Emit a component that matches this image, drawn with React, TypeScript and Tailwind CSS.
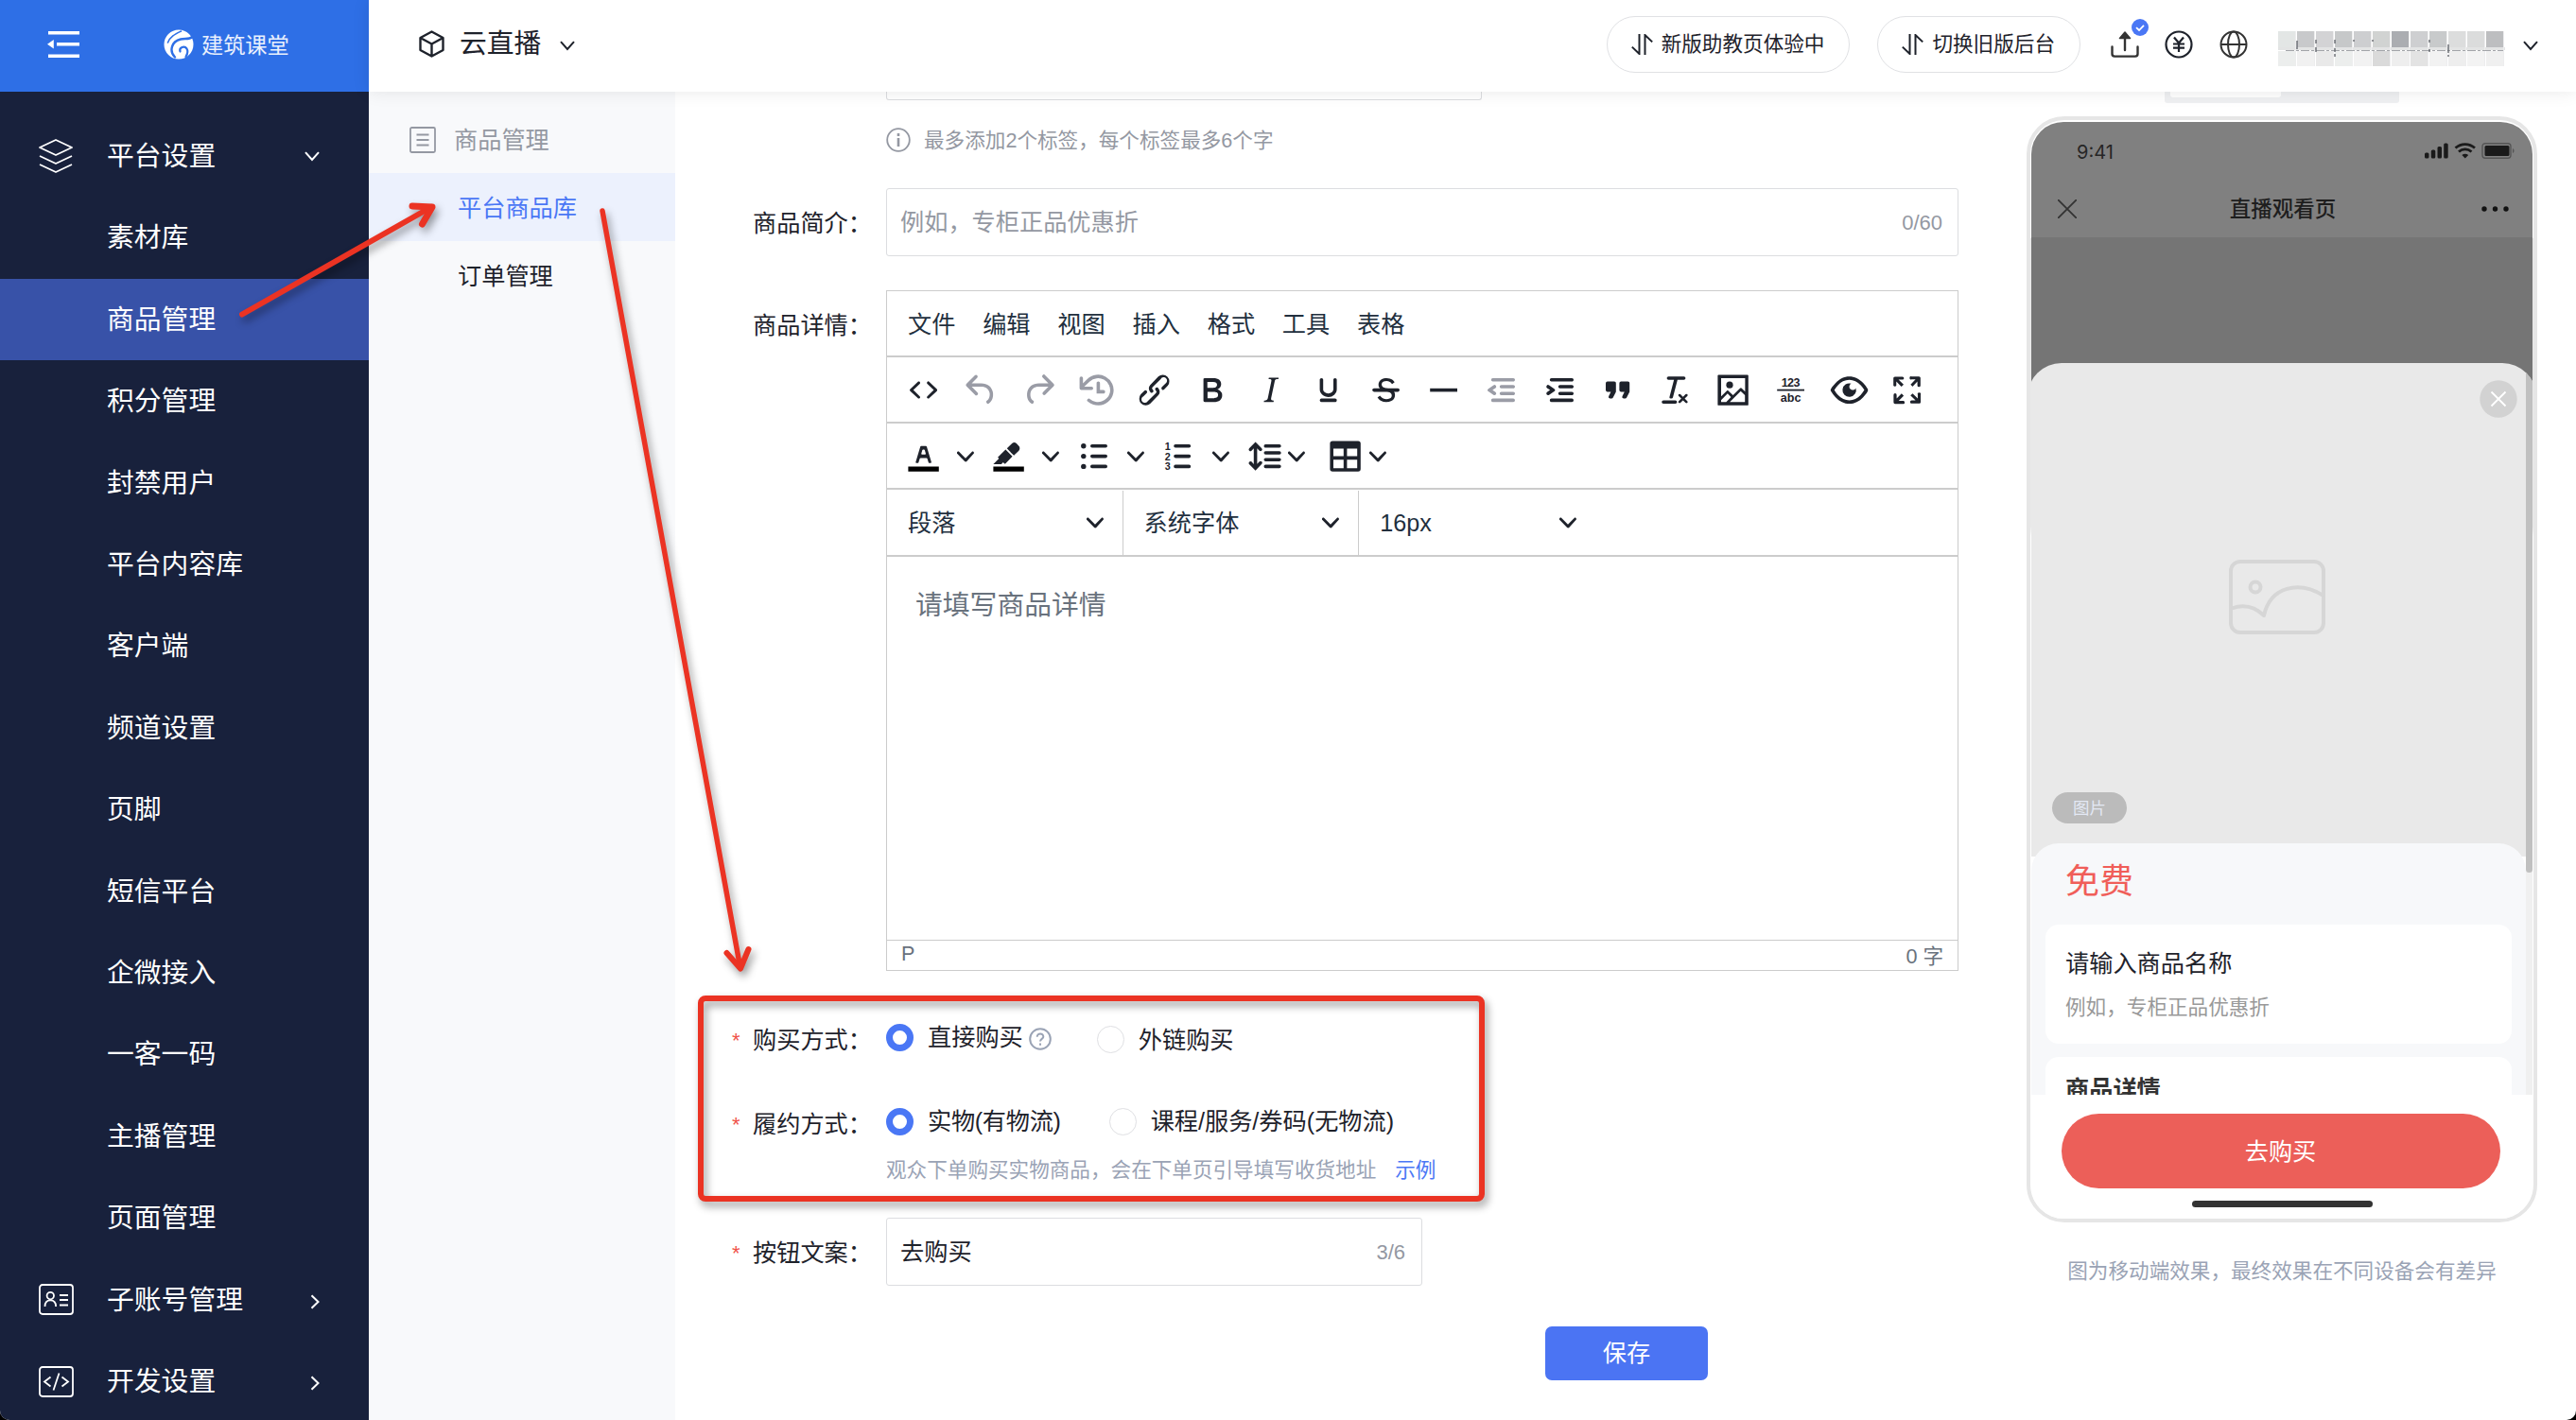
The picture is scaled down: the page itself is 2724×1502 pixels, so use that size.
import type { ReactNode } from "react";
import clsx from "clsx";

type MenuItem = {
  label: string;
  icon?: ReactNode;
  arrow?: "down" | "right";
  active?: boolean;
};

/* ---------- small shared icons ---------- */

function Chevron({ className, right }: { className?: string; right?: boolean }) {
  return (
    <svg
      viewBox="0 0 16 16"
      className={clsx("h-4 w-4 shrink-0", className)}
      fill="none"
      stroke="currentColor"
      strokeWidth="2"
    >
      <path d={right ? "M4.5 1.2 11.5 8l-7 6.8" : "M1 4.2 8 12l7-7.8"} />
    </svg>
  );
}

function EditorChevron({ className }: { className?: string }) {
  return (
    <svg viewBox="0 0 10 10" className={clsx("h-[18px] w-[18px] shrink-0 fill-[#1e222b]", className)}>
      <path d="M8.7 2.2c.3-.3.8-.3 1 0 .4.4.4.9 0 1.2L5.7 7.8c-.3.3-.9.3-1.2 0L.2 3.4a.8.8 0 0 1 0-1.2c.3-.3.8-.3 1.1 0L5 6l3.7-3.8Z" />
    </svg>
  );
}

/* ---------- sidebar ---------- */

const layersIcon = (
  <svg viewBox="0 0 36 36" className="h-9 w-9" fill="none" stroke="#fff" strokeWidth="1.8" strokeLinejoin="round">
    <path d="M18 1 35 9l-17 8L1 9z" />
    <path d="m1 18 17 8 17-8M1 27l17 8 17-8" />
  </svg>
);

const accountIcon = (
  <svg viewBox="0 0 37 33" className="h-[33px] w-[37px]" fill="none" stroke="#fff" strokeWidth="1.8">
    <rect x="1" y="1" width="35" height="31" rx="3" />
    <circle cx="12.3" cy="12.6" r="3.7" />
    <path d="M6.5 24c0-4.2 2.2-6.6 5.8-6.6s5.8 2.4 5.8 6.6M22 12h9M22 17h9M22 22.500h9" />
  </svg>
);

const codeIcon = (
  <svg viewBox="0 0 37 33" className="h-[33px] w-[37px]" fill="none" stroke="#fff" strokeWidth="1.8">
    <rect x="1" y="1" width="35" height="31" rx="3" />
    <path d="m12.500 11.500-6.500 5 6.500 5M24.500 11.500l6.500 5-6.500 5M21.500 7.500l-6 18" />
  </svg>
);

const MENU: MenuItem[] = [
  { label: "平台设置", icon: layersIcon, arrow: "down" },
  { label: "素材库" },
  { label: "商品管理", active: true },
  { label: "积分管理" },
  { label: "封禁用户" },
  { label: "平台内容库" },
  { label: "客户端" },
  { label: "频道设置" },
  { label: "页脚" },
  { label: "短信平台" },
  { label: "企微接入" },
  { label: "一客一码" },
  { label: "主播管理" },
  { label: "页面管理" },
  { label: "子账号管理", icon: accountIcon, arrow: "right" },
  { label: "开发设置", icon: codeIcon, arrow: "right" },
];

function Sidebar() {
  return (
    <aside className="flex w-[390px] shrink-0 flex-col bg-[#18213c] text-white">
      <div className="flex h-[97px] shrink-0 items-center bg-[#2e6fe6] pl-[50px]">
        <svg viewBox="0 0 34 30" className="-mt-1 h-[30px] w-[34px] fill-white">
          <path d="M1 1h33v3.600H1zM10 13h24v3.600H10zM1 25.500h33v3.600H1zM0 14.800 6.800 10v9.600z" />
        </svg>
        <svg viewBox="0 0 32 32" className="-mt-1 ml-[89px] h-8 w-8">
          <circle cx="16" cy="16" r="15.500" fill="#fff" />
          <g fill="none" stroke="#2e6fe6" strokeLinecap="round">
            <path d="M4.500 14C7 7.500 12.500 5 18.500 2" strokeWidth="1.600" />
            <path d="M12 29.500C5.500 23 8.500 12.500 18 10.500c5-1 9 .5 12.500-2.500" strokeWidth="2.400" />
            <path d="M17.500 23.500c-1.500-4.500 4.500-6.500 7-3 1.600 2.400.8 5.500-1 8.500" strokeWidth="2.200" />
          </g>
        </svg>
        <span className="ml-2 text-[23.200px] leading-none text-white/90">建筑课堂</span>
      </div>
      <nav className="flex flex-col pt-[25px]">
        {MENU.map((item) => (
          <div
            key={item.label}
            className={clsx("flex h-[86.4px] shrink-0 items-center pl-[41px]", item.active && "bg-[#3852a8]")}
          >
            <span className="w-[72px]">{item.icon}</span>
            <span className="pt-px text-[28.8px]">{item.label}</span>
            {item.arrow === "down" && <Chevron className="ml-auto mr-[52px]" />}
            {item.arrow === "right" && <Chevron right className="ml-auto mr-[49px] mt-1" />}
          </div>
        ))}
      </nav>
    </aside>
  );
}

/* ---------- top bar ---------- */

function SwitchIcon() {
  return (
    <svg viewBox="0 0 23 22" className="h-[22px] w-[23px]" fill="none" stroke="#1e222b" strokeWidth="2">
      <path d="M8.500 0v21L.8 13.600M14.500 22V1l7.700 7.400" />
    </svg>
  );
}

// blurred-out account name: two rows of tiles
const MOSAIC = [
  ["#e3e6e5", "#eceeed"],
  ["#c8c9cb", "#f1f1f1"],
  ["#d3d3d5", "#e9e9e9"],
  ["#c6c8c9", "#eceeed"],
  ["#cdced0", "#f2f2f2"],
  ["#d1d3d2", "#dadada"],
  ["#abadb1", "#eeeeee"],
  ["#cecfd1", "#e3e3e3"],
  ["#c8cacb", "#f2f2f2"],
  ["#dcdddd", "#eeeeee"],
  ["#dbdcdc", "#f3f3f3"],
  ["#bdbec0", "#f0f0f0"],
];

function AccountMosaic() {
  return (
    <svg viewBox="0 0 240 37" className="h-[37px] w-[240px]">
      {MOSAIC.map(([top, bottom], i) => (
        <g key={i}>
          <rect x={i * 20} y="0" width="18" height="17" fill={top} />
          <rect x={i * 20} y="17" width="20" height="3" fill="#e3e4e4" />
          <rect x={i * 20} y="21" width="18" height="16" fill={bottom} />
          <rect x={i * 20 + 18} y="0" width="1" height="37" fill="#ededee" />
        </g>
      ))}
      <path d="M8 20.500h230" stroke="#a3a5a9" strokeWidth="1" strokeDasharray="9 2 3 2" />
      <path
        d="M20 10v9M40 9v4M40 17v5M60 9v4M60 18v4M60 24v3M80 9v2M100 9v2M160 9v3M160 19v3M180 14v9M180 25v2"
        stroke="#5d6067"
        strokeWidth="1.300"
      />
    </svg>
  );
}

function TopBar() {
  return (
    <header className="relative z-10 flex h-[97px] shrink-0 items-center bg-white pb-1 pr-[40px] text-[#1e222b] shadow-[0_0_18px_rgba(0,0,0,0.09)]">
      <svg
        viewBox="0 0 27 29"
        className="ml-[53px] h-[29px] w-[27px]"
        fill="none"
        stroke="currentColor"
        strokeWidth="2.400"
        strokeLinejoin="round"
      >
        <path d="M13.500 1.500 25.500 8v13l-12 6.500L1.500 21V8zM1.500 8l12 6.500L25.500 8M13.500 14.500v13" />
      </svg>
      <span className="ml-4 text-[28.8px]">云直播</span>
      <Chevron className="ml-5 mt-[2px]" />

      <div className="ml-auto flex items-center">
        <div className="flex h-[60px] items-center rounded-full border border-[#e0e1e4] pl-[25px] pr-[26px]">
          <SwitchIcon />
          <span className="ml-[9px] pt-px text-[21.6px]">新版助教页体验中</span>
        </div>
        <div className="ml-[29px] flex h-[60px] items-center rounded-full border border-[#e0e1e4] pl-[25px] pr-[26px]">
          <SwitchIcon />
          <span className="ml-[9px] pt-px text-[21.6px]">切换旧版后台</span>
        </div>

        <div className="relative ml-8 h-7 w-[30px]">
          <svg viewBox="0 0 30 28" className="h-7 w-[30px]" fill="none" stroke="#333" strokeWidth="2.400">
            <path d="M1.500 16.500V24c0 1.600 1 2.600 2.600 2.600h21.800c1.600 0 2.600-1 2.600-2.600v-7.500M15 20V6" strokeLinecap="round" />
            <path d="M15 1 9.500 7.500h11z" fill="#333" strokeWidth="1.500" strokeLinejoin="round" />
          </svg>
          <svg viewBox="0 0 18 18" className="absolute -top-[13px] left-[22px] h-[18px] w-[18px]">
            <circle cx="9" cy="9" r="9" fill="#4a77f5" />
            <path d="m5 9.200 3 2.800 5-5.200" fill="none" stroke="#fff" strokeWidth="1.800" />
          </svg>
        </div>
        <svg viewBox="0 0 30 30" className="ml-[27px] h-[30px] w-[30px]" fill="none" stroke="#1e222b" strokeWidth="2.200">
          <circle cx="15" cy="15" r="13.500" />
          <path d="m10 7.500 5 6 5-6M9 14.500h12M9 18.700h12M15 13.500V23" />
        </svg>
        <svg viewBox="0 0 30 30" className="ml-7 h-[30px] w-[30px]" fill="none" stroke="#333" strokeWidth="2">
          <circle cx="15" cy="15" r="13.500" />
          <ellipse cx="15" cy="15" rx="6" ry="13.500" />
          <path d="M1.500 15h27" />
        </svg>
        <div className="ml-8 mt-[10px]">
          <AccountMosaic />
        </div>
        <Chevron className="ml-[19px] mt-[2px]" />
      </div>
    </header>
  );
}

/* ---------- second level menu ---------- */

function SubMenu() {
  return (
    <div className="flex w-[324px] shrink-0 flex-col bg-[#f8f9fb] pt-[14px] text-[25.2px]">
      <div className="flex h-[72px] items-center pl-[43px] pt-[2px] text-[#9498a2]">
        <svg viewBox="0 0 28 28" className="h-7 w-7" fill="none" stroke="currentColor" strokeWidth="1.800">
          <rect x="1" y="1" width="26" height="26" rx="1.500" />
          <path d="M7.500 8.500h13M7.500 14h13M7.500 19.500h13" />
        </svg>
        <span className="ml-[19px] pt-[2px]">商品管理</span>
      </div>
      <div className="flex h-[72px] items-center bg-[#ecf1fd] pl-[94px] pt-[4px] text-[#4a77f5]">平台商品库</div>
      <div className="flex h-[72px] items-center pl-[94px] pt-[4px] text-[#1e222b]">订单管理</div>
    </div>
  );
}

/* ---------- rich text editor ---------- */

function Glyph({ children, muted }: { children: ReactNode; muted?: boolean }) {
  return (
    <svg
      viewBox="0 0 24 24"
      className={clsx("h-[43.2px] w-[43.2px] shrink-0", muted ? "fill-[#9a9ca6]" : "fill-[#1e222b]")}
    >
      {children}
    </svg>
  );
}

function Tool({ children, muted }: { children: ReactNode; muted?: boolean }) {
  return (
    <div className="flex w-[61.200px] shrink-0 items-center justify-center">
      <Glyph muted={muted}>{children}</Glyph>
    </div>
  );
}

function SplitTool({ children }: { children: ReactNode }) {
  return (
    <div className="flex w-[90px] items-center">
      <Tool>{children}</Tool>
      <EditorChevron className="ml-[5px]" />
    </div>
  );
}

function MenuTool({ children }: { children: ReactNode }) {
  return (
    <div className="flex w-[86px] items-center pl-[9px]">
      <Glyph>{children}</Glyph>
      <EditorChevron className="ml-1" />
    </div>
  );
}

function Select({ label, last }: { label: string; last?: boolean }) {
  return (
    <div
      className={clsx(
        "flex h-[68px] w-[249.600px] items-center justify-between pl-[22px] pr-[20px]",
        !last && "border-r border-[#ccc]",
      )}
    >
      <span className="pt-[3px]">{label}</span>
      <EditorChevron className="mt-px" />
    </div>
  );
}

const MENUBAR = ["文件", "编辑", "视图", "插入", "格式", "工具", "表格"];

function Editor() {
  return (
    <div className="flex h-[720px] w-[1134px] flex-col border border-[#ccc] text-[25.2px] text-[#222f3e]">
      <div className="flex h-[70px] items-center gap-[28.8px] border-b-2 border-[#ccc] pl-[22px] pt-[3px]">
        {MENUBAR.map((m) => (
          <span key={m}>{m}</span>
        ))}
      </div>

      <div className="flex h-[70px] items-center border-b-2 border-[#ccc] pl-[7.500px] pt-[2px]">
        <Tool>
          <path d="M9.800 15.700c.3.3.3.8 0 1-.3.4-.9.4-1.200 0l-4.400-4.100a.8.8 0 0 1 0-1.200l4.400-4.200c.3-.3.9-.3 1.200 0 .3.3.3.8 0 1.100L6 12l3.800 3.700ZM14.200 15.700c-.3.3-.3.8 0 1 .4.4.9.4 1.200 0l4.400-4.100c.3-.3.3-.9 0-1.200l-4.400-4.200a.8.8 0 0 0-1.200 0c-.3.3-.3.8 0 1.100L18 12l-3.800 3.700Z" />
        </Tool>
        <Tool muted>
          <path d="M6.400 8H12c3.700 0 6.200 2 6.800 5.100.6 2.700-.4 5.600-2.300 6.800a1 1 0 0 1-1-1.800c1.100-.6 1.800-2.700 1.400-4.600-.5-2.100-2.100-3.500-4.900-3.500H6.400l3.300 3.300a1 1 0 1 1-1.400 1.400l-5-5a1 1 0 0 1 0-1.400l5-5a1 1 0 0 1 1.400 1.400L6.400 8Z" />
        </Tool>
        <Tool muted>
          <path d="M17.600 10H12c-2.800 0-4.400 1.400-4.900 3.500-.4 2 .3 4 1.400 4.600a1 1 0 1 1-1 1.800c-2-1.200-2.900-4.100-2.300-6.800.6-3 3-5.100 6.800-5.100h5.600l-3.300-3.300a1 1 0 1 1 1.400-1.400l5 5a1 1 0 0 1 0 1.400l-5 5a1 1 0 0 1-1.400-1.400l3.300-3.300Z" />
        </Tool>
        <Tool muted>
          <path d="M17 13c0 .6-.4 1-1 1h-4V8c0-.6.4-1 1-1s1 .4 1 1v4h2c.6 0 1 .4 1 1Z" />
          <path d="M4.700 10H9a1 1 0 0 1 0 2H3a1 1 0 0 1-1-1V5a1 1 0 1 1 2 0v3l2.500-2.400a9.200 9.200 0 0 1 10.800-1.500A9 9 0 0 1 13.400 21c-2.400.1-4.700-.7-6.500-2.200a1 1 0 1 1 1.300-1.500 7.200 7.200 0 0 0 11.600-3.700 7 7 0 0 0-3.500-7.700A7.200 7.200 0 0 0 8 7L4.700 10Z" />
        </Tool>
        <Tool>
          <path d="M6.200 12.300a1 1 0 0 1 1.400 1.400l-2 2a2 2 0 1 0 2.600 2.800l4.800-4.800a1 1 0 0 0 0-1.400 1 1 0 1 1 1.400-1.300 2.900 2.900 0 0 1 0 4L9.600 20a3.900 3.900 0 0 1-5.500-5.500l2-2Zm11.600-.6a1 1 0 0 1-1.400-1.400l2-2a2 2 0 1 0-2.600-2.800L11 10.300a1 1 0 0 0 0 1.400A1 1 0 1 1 9.600 13a2.900 2.900 0 0 1 0-4L14.400 4a3.900 3.900 0 0 1 5.500 5.500l-2 2Z" />
        </Tool>
        <Tool>
          <path
            fillRule="evenodd"
            d="M7.800 19c-.3 0-.5 0-.6-.2l-.2-.5V5.700c0-.2 0-.4.2-.5l.6-.2h5c1.500 0 2.700.3 3.500 1 .7.6 1.100 1.400 1.100 2.500a3 3 0 0 1-.6 1.900c-.4.6-1 1-1.600 1.200.4.1.9.3 1.300.6s.8.7 1 1.200c.4.4.5 1 .5 1.600 0 1.300-.4 2.300-1.300 3-.8.7-2.100 1-3.800 1H7.800Zm5-8.300c.6 0 1.200-.1 1.600-.5.4-.3.6-.7.6-1.300 0-1.100-.8-1.700-2.300-1.700H9.300v3.500h3.400Zm.5 6c.7 0 1.300-.1 1.700-.4.4-.4.6-.9.6-1.500s-.2-1-.7-1.400c-.4-.3-1-.4-2-.4H9.400v3.800h4Z"
          />
        </Tool>
        <Tool>
          <path d="m16.700 4.700-.1.900h-.3c-.6 0-1 0-1.400.3-.3.3-.4.6-.5 1.100l-2.100 9.800v.6c0 .5.4.8 1.400.8h.2l-.2.8H8l.2-.8h.2c1.100 0 1.800-.5 2-1.500l2-9.800.1-.5c0-.6-.4-.8-1.400-.8h-.3l.2-.9h5.800Z" />
        </Tool>
        <Tool>
          <path d="M16 5c.6 0 1 .4 1 1v5.500a4 4 0 0 1-.4 1.800l-1 1.400a5.300 5.300 0 0 1-5.500 1 5 5 0 0 1-1.600-1c-.5-.4-.8-.9-1.100-1.400a4 4 0 0 1-.4-1.800V6c0-.6.4-1 1-1s1 .4 1 1v5.500c0 .3 0 .6.2 1l.6.7a3.300 3.300 0 0 0 2.200.8 3.400 3.400 0 0 0 2.200-.8c.3-.2.4-.5.6-.8l.2-.9V6c0-.6.4-1 1-1ZM8 17h8c.6 0 1 .4 1 1s-.4 1-1 1H8a1 1 0 0 1 0-2Z" />
        </Tool>
        <Tool>
          <path d="M15.600 8.500c-.5-.7-1-1.100-1.300-1.300-.6-.4-1.300-.6-2-.6-2.700 0-2.800 1.700-2.800 2.100 0 1.600 1.800 2 3.200 2.300 4.400.9 4.600 2.800 4.600 3.900 0 1.400-.7 4.100-5 4.100A6.200 6.200 0 0 1 7 16.400l1.500-1.100c.4.6 1.600 2 3.700 2 1.600 0 2.500-.4 3-1.200.4-.8.3-2-.8-2.600-.7-.4-1.600-.7-2.900-1-1-.2-3.900-.8-3.900-3.600C7.600 6 10.300 5 12.400 5c2.900 0 4.200 1.600 4.700 2.400l-1.500 1.100Z" />
          <path d="M5 11h14a1 1 0 0 1 0 2H5a1 1 0 0 1 0-2Z" />
        </Tool>
        <Tool>
          <path d="M4 11h16v2H4z" />
        </Tool>
        <Tool muted>
          <path d="M7 5h12c.6 0 1 .4 1 1s-.4 1-1 1H7a1 1 0 1 1 0-2Zm5 4h7c.6 0 1 .4 1 1s-.4 1-1 1h-7a1 1 0 0 1 0-2Zm0 4h7c.6 0 1 .4 1 1s-.4 1-1 1h-7a1 1 0 0 1 0-2Zm-5 4h12a1 1 0 0 1 0 2H7a1 1 0 0 1 0-2Zm1.600-3.800a1 1 0 0 1-1.200 1.600l-3-2a1 1 0 0 1 0-1.600l3-2a1 1 0 0 1 1.200 1.600L6.800 12l1.800 1.200Z" />
        </Tool>
        <Tool>
          <path d="M7 5h12c.6 0 1 .4 1 1s-.4 1-1 1H7a1 1 0 1 1 0-2Zm5 4h7c.6 0 1 .4 1 1s-.4 1-1 1h-7a1 1 0 0 1 0-2Zm0 4h7c.6 0 1 .4 1 1s-.4 1-1 1h-7a1 1 0 0 1 0-2Zm-5 4h12a1 1 0 0 1 0 2H7a1 1 0 0 1 0-2Zm-2.600-3.800L6.200 12l-1.800-1.200a1 1 0 0 1 1.200-1.600l3 2a1 1 0 0 1 0 1.600l-3 2a1 1 0 1 1-1.200-1.600Z" />
        </Tool>
        <Tool>
          <path d="M7.500 17h.9c.4 0 .7-.2.9-.6L11 13V8c0-.6-.4-1-1-1H6a1 1 0 0 0-1 1v4c0 .6.4 1 1 1h2l-1.300 2.700a1 1 0 0 0 .8 1.300Zm8 0h.9c.4 0 .7-.2.9-.6L19 13V8c0-.6-.4-1-1-1h-4a1 1 0 0 0-1 1v4c0 .6.4 1 1 1h2l-1.300 2.700a1 1 0 0 0 .8 1.300Z" />
        </Tool>
        <Tool>
          <path d="M13.200 6a1 1 0 0 1 0 .2l-2.600 10a1 1 0 0 1-1 .8h-.2a.8.8 0 0 1-.8-1l2.600-10H8a1 1 0 1 1 0-2h9a1 1 0 0 1 0 2h-3.800ZM5 18h7a1 1 0 0 1 0 2H5a1 1 0 0 1 0-2Zm13 1.500L16.500 18 15 19.500a.7.7 0 0 1-1-1l1.500-1.500-1.500-1.500a.7.7 0 0 1 1-1l1.500 1.500 1.500-1.500a.7.7 0 0 1 1 1L17.500 17l1.500 1.500a.7.7 0 0 1-1 1Z" />
        </Tool>
        <Tool>
          <path
            fillRule="evenodd"
            d="m5 15.700 3.300-3.200c.3-.3.7-.3 1 0L12 15l4.100-4c.3-.4.8-.4 1 0l2 1.900V5H5v10.700ZM5 18v1h3l2.800-2.900-2-2L5 17.900Zm14-3-2.500-2.400-6.400 6.500H19v-4ZM3.500 3h17c.3 0 .5.200.5.500v17c0 .3-.2.500-.5.500h-17a.5.500 0 0 1-.5-.5v-17c0-.3.200-.5.500-.5Z"
          />
          <circle cx="10" cy="9" r="2" />
        </Tool>
        <Tool>
          <path d="M4 11.500h16v1H4z" />
          <text x="12" y="10" fontSize="7" fontWeight="700" textAnchor="middle" textLength="11">
            123
          </text>
          <text x="12" y="19" fontSize="7" fontWeight="700" textAnchor="middle">
            abc
          </text>
        </Tool>
        <Tool>
          <path
            fillRule="evenodd"
            d="M3.500 12.500c.5.8 1.100 1.600 1.800 2.300 2 2 4.200 3.200 6.700 3.200s4.700-1.200 6.700-3.200a16.200 16.200 0 0 0 2.100-2.800 15.700 15.700 0 0 0-2.100-2.800c-2-2-4.200-3.200-6.700-3.200a9.300 9.300 0 0 0-6.700 3.200A16.200 16.200 0 0 0 3.200 12c0 .2.200.3.300.5Zm-2.400-1 .7-1.200L4 7.800C6.200 5.400 8.900 4 12 4c3 0 5.800 1.400 8.100 3.800a18.200 18.200 0 0 1 2.800 3.700v1l-.7 1.200-2.100 2.500c-2.300 2.400-5 3.800-8.100 3.800-3 0-5.800-1.400-8.100-3.800a18.200 18.200 0 0 1-2.800-3.700 1 1 0 0 1 0-1Zm12-3.300a2 2 0 1 0 2.700 2.600 4 4 0 1 1-2.600-2.600Z"
          />
        </Tool>
        <Tool>
          <path d="m15.300 10-1.200-1.300 2.900-3h-2.300a.9.900 0 1 1 0-1.700H19c.5 0 .9.400.9.900v4.400a.9.900 0 1 1-1.800 0V7l-2.900 3Zm0 4 3 3v-2.300a.9.900 0 1 1 1.700 0V19c0 .5-.4.900-.9.900h-4.400a.9.900 0 1 1 0-1.800H17l-3-2.900 1.300-1.200ZM10 15.400l-2.900 3h2.300a.9.900 0 1 1 0 1.700H5a.9.900 0 0 1-.9-.9v-4.400a.9.900 0 1 1 1.800 0V17l2.900-3 1.200 1.300ZM8.700 10 5.700 7v2.300a.9.900 0 0 1-1.700 0V5c0-.5.400-.9.900-.9h4.400a.9.900 0 0 1 0 1.800H7l3 2.900-1.300 1.200Z" />
        </Tool>
      </div>

      <div className="flex h-[70px] items-center border-b-2 border-[#ccc] pl-[7.500px] pt-[2px]">
        <SplitTool>
          <path d="M3 18h18v3H3z" fill="#000" />
          <path
            fillRule="evenodd"
            d="M8.700 16h-.8a.5.500 0 0 1-.5-.6l2.700-9c.1-.3.3-.4.5-.4h2.800c.2 0 .4.1.5.4l2.700 9a.5.500 0 0 1-.5.6h-.8a.4.400 0 0 1-.4-.4l-.7-2.200c0-.3-.3-.4-.5-.4h-3.400c-.2 0-.4.1-.5.4l-.7 2.200c0 .3-.2.4-.4.400Zm2.600-7.600-.6 2a.5.500 0 0 0 .5.6h1.600a.5.500 0 0 0 .5-.6l-.6-2c0-.3-.3-.4-.5-.4h-.4c-.2 0-.4.1-.5.400Z"
          />
        </SplitTool>
        <SplitTool>
          <path d="M3 18h18v3H3z" fill="#000" />
          <path d="M7.700 16.700H3l3.300-3.300-.7-.8L10.200 8l4 4.100-4 4.200c-.2.2-.6.2-.8 0l-.6-.7-1.100 1.100Zm5-7.500L11 7.400l3-2.900a2 2 0 0 1 2.600 0L18 6c.7.7.7 2 0 2.700l-2.900 2.900-1.800-1.800-.5-.6" />
        </SplitTool>
        <SplitTool>
          <path d="M11 5h8a1 1 0 0 1 0 2h-8a1 1 0 0 1 0-2Zm0 6h8a1 1 0 0 1 0 2h-8a1 1 0 0 1 0-2Zm0 6h8a1 1 0 0 1 0 2h-8a1 1 0 0 1 0-2Z" />
          <circle cx="6" cy="6" r="1.500" />
          <circle cx="6" cy="12" r="1.500" />
          <circle cx="6" cy="18" r="1.500" />
        </SplitTool>
        <SplitTool>
          <path d="M10 5h8a1 1 0 0 1 0 2h-8a1 1 0 0 1 0-2Zm0 6h8a1 1 0 0 1 0 2h-8a1 1 0 0 1 0-2Zm0 6h8a1 1 0 0 1 0 2h-8a1 1 0 0 1 0-2Z" />
          <g fontSize="6" fontWeight="700" textAnchor="middle">
            <text x="5.400" y="8.200">1</text>
            <text x="5.400" y="14.200">2</text>
            <text x="5.400" y="20.200">3</text>
          </g>
        </SplitTool>
        <MenuTool>
          <path d="M21 5a1 1 0 0 1 .1 2H13a1 1 0 0 1-.1-2H21zm0 4a1 1 0 0 1 .1 2H13a1 1 0 0 1-.1-2H21zm0 4a1 1 0 0 1 .1 2H13a1 1 0 0 1-.1-2H21zm0 4a1 1 0 0 1 .1 2H13a1 1 0 0 1-.1-2H21zM7 3.600l3.700 3.700a1 1 0 0 1-1.300 1.500h-.1L8 7.300v9.200l1.300-1.300a1 1 0 0 1 1.300 0h.1c.4.4.4 1 0 1.300v.1L7 20.400l-3.700-3.700a1 1 0 0 1 1.300-1.500h.1L6 16.700V7.400L4.700 8.700a1 1 0 0 1-1.300 0h-.1a1 1 0 0 1 0-1.300v-.1L7 3.600z" />
        </MenuTool>
        <MenuTool>
          <path
            fillRule="evenodd"
            d="M19.500 3A1.500 1.500 0 0 1 21 4.500v15a1.500 1.500 0 0 1-1.500 1.500h-15A1.500 1.500 0 0 1 3 19.500v-15A1.500 1.500 0 0 1 4.500 3h15ZM5 14v5h6v-5H5Zm14 0h-6v5h6v-5Zm0-6.500h-6V12h6V7.500ZM5 12h6V7.500H5V12Z"
          />
        </MenuTool>
      </div>

      <div className="flex h-[71px] items-center border-b-2 border-[#ccc]">
        <Select label="段落" />
        <Select label="系统字体" />
        <Select label="16px" last />
      </div>

      <div className="flex-1 pl-[30px] pt-[30px] text-[28.8px] leading-[43px] text-[#69727d]">请填写商品详情</div>

      <div className="flex h-[32px] items-center justify-between border-t border-[#ccc] px-[15px] text-[21.6px] leading-none text-[#69727d]">
        <span className="-mt-1">P</span>
        <span className="pt-[2px]">0 字</span>
      </div>
    </div>
  );
}

/* ---------- form ---------- */

function FormRow({
  label,
  required,
  children,
  className,
  labelClassName,
}: {
  label?: string;
  required?: boolean;
  children: ReactNode;
  className?: string;
  labelClassName?: string;
}) {
  return (
    <div className={clsx("flex", className)}>
      <div className={clsx("flex w-[223px] shrink-0 items-center pl-[60px]", labelClassName ?? "pt-[3px]")}>
        <span className="w-[22px] text-[22px] leading-none text-[#f0524b]">{required && "*"}</span>
        {label && <span className="whitespace-nowrap">{label}：</span>}
      </div>
      {children}
    </div>
  );
}

function Radio({ checked, className }: { checked?: boolean; className?: string }) {
  return (
    <span
      className={clsx(
        "h-[29px] w-[29px] shrink-0 rounded-full bg-white",
        checked ? "border-[7px] border-[#4a77f5]" : "border border-[#dfe0e3]",
        className,
      )}
    />
  );
}

function ProductForm() {
  return (
    <div className="flex w-[1357px] shrink-0 flex-col text-[25.2px] text-[#1e222b]">
      <FormRow>
        <div className="h-[9px] w-[630px] rounded-b-[3px] border border-t-0 border-[#dcdde0]" />
      </FormRow>
      <FormRow className="mb-[9px] h-[84px]">
        <div className="flex items-center text-[21.6px] text-[#9498a2]">
          <svg viewBox="0 0 26 26" className="h-[26px] w-[26px]" fill="none" stroke="currentColor" strokeWidth="1.800">
            <circle cx="13" cy="13" r="11.800" />
            <path d="M13 11v9M13 6v3" strokeWidth="2.600" />
          </svg>
          <span className="ml-[14px] pt-[3px]">最多添加2个标签，每个标签最多6个字</span>
        </div>
      </FormRow>

      <FormRow label="商品简介" className="h-[72px]">
        <div className="flex w-[1134px] items-center justify-between rounded-[3px] border border-[#dcdde0] pl-[14px] pr-[16px] text-[#9498a2]">
          <span className="pt-[2px]">例如，专柜正品优惠折</span>
          <span className="text-[22px]">0/60</span>
        </div>
      </FormRow>

      <FormRow label="商品详情" className="mt-9" labelClassName="h-[75px]">
        <Editor />
      </FormRow>

      <FormRow label="购买方式" required className="mt-[43px] h-[58px]">
        <div className="flex items-center">
          <Radio checked className="-mt-1" />
          <span className="-mt-[3px] ml-[15px]">直接购买</span>
          <svg viewBox="0 0 24 24" className="ml-[6px] h-6 w-6" fill="none" stroke="#9aa3b5" strokeWidth="2">
            <circle cx="12" cy="12" r="10.800" />
            <path d="M8.700 9.800c0-4.600 6.800-4.200 6.600-.2-.1 2.300-3.300 2.400-3.300 5M12 16.500v2.300" />
          </svg>
          <Radio className="ml-12 mt-px" />
          <span className="ml-[15px] pt-[3px]">外链购买</span>
        </div>
      </FormRow>

      <FormRow label="履约方式" required className="mt-[29px] h-[58px]" labelClassName="pt-[7px]">
        <div className="flex items-center">
          <Radio checked />
          <span className="ml-[15px] pt-[2px] tracking-[-0.3px]">实物(有物流)</span>
          <Radio className="ml-[51px]" />
          <span className="ml-[15px] pt-[2px]">课程/服务/券码(无物流)</span>
        </div>
      </FormRow>
      <FormRow className="h-[45px]">
        <div className="flex items-center pt-[2px] text-[21.6px] text-[#9aa3b5]">
          <span>观众下单购买实物商品，会在下单页引导填写收货地址</span>
          <span className="ml-5 text-[#4a77f5]">示例</span>
        </div>
      </FormRow>

      <FormRow label="按钮文案" required className="mt-7 h-[72px]">
        <div className="flex w-[567px] items-center justify-between rounded-[3px] border border-[#dcdde0] pl-[14px] pr-[17px]">
          <span className="pt-[2px]">去购买</span>
          <span className="text-[22px] text-[#9498a2]">3/6</span>
        </div>
      </FormRow>

      <button className="ml-[920px] mt-[43px] h-[57px] w-[172px] rounded-[7px] bg-[#4b74f3] pt-px text-white">
        保存
      </button>
    </div>
  );
}

/* ---------- phone preview ---------- */

function PhoneStatus() {
  return (
    <div className="flex h-[64px] items-center pl-[48px] pr-[19px]">
      <span className="font-[Inter] text-[20px] text-[#262626]">9:41</span>
      <svg viewBox="0 0 95 17" className="-mt-[4px] ml-auto h-[17px] w-[95px] fill-[#1a1a1a]">
        <rect x="0" y="10.500" width="4.500" height="6" rx="1.500" />
        <rect x="6.800" y="7.500" width="4.500" height="9" rx="1.500" />
        <rect x="13.500" y="4" width="4.500" height="12.500" rx="1.500" />
        <rect x="20.200" y="0.500" width="4.500" height="16" rx="1.500" />
        <g fill="none" stroke="#1a1a1a" strokeWidth="2.800">
          <path d="M32.500 5.500c6-5.300 14.500-5.300 20.500 0M36 9.500c4-3.400 9.500-3.400 13.500 0" />
        </g>
        <path d="m42.800 16.500-3.400-3.600c2-1.600 4.800-1.600 6.800 0z" />
        <rect x="61" y="0.700" width="30" height="15.500" rx="3" fill="none" stroke="#555" strokeWidth="1.400" />
        <rect x="63.500" y="3" width="26" height="11" rx="1.500" />
        <path d="M93 6c2 .8 2 4 0 5z" fill="#555" />
      </svg>
    </div>
  );
}

function PhonePreview() {
  return (
    <div className="ml-[72px] flex w-[540px] shrink-0 flex-col items-center">
      <div className="flex h-3 w-[248px] items-start rounded-b-[3px] bg-[#eff0f2] pl-[6px]">
        <div className="h-[6px] w-[117px] rounded-b-[3px] bg-white" />
      </div>
      <div className="mt-[14px] h-[1170px] w-full rounded-[40px] border-4 border-[#e6e6e6] bg-[linear-gradient(#fff_125px,#e9e9e9_125px,#e9e9e9_430px,#fff_440px)] px-px pt-[2px]">
        <div className="flex h-full flex-col overflow-hidden rounded-[34px]">
          <div className="h-[122px] shrink-0 bg-[#808080]">
            <PhoneStatus />
            <div className="flex h-[56px] items-center justify-between pl-[28px] pr-[25px]">
              <svg viewBox="0 0 20 20" className="h-5 w-5" stroke="#333" strokeWidth="1.800">
                <path d="m0 0 20 20M20 0 0 20" />
              </svg>
              <span className="pl-2 pt-px text-[22.500px] font-medium text-[#1e1e1e]">直播观看页</span>
              <svg viewBox="0 0 29 6" className="h-[6px] w-[29px] fill-[#111]">
                <circle cx="3" cy="3" r="2.700" />
                <circle cx="14.500" cy="3" r="2.700" />
                <circle cx="26" cy="3" r="2.700" />
              </svg>
            </div>
          </div>

          <div className="h-[907px] shrink-0 overflow-hidden bg-[#757575] pt-[133px]">
            {/* bottom sheet, a little wider than the screen */}
            <div className="relative -mx-1 h-[774px] overflow-hidden rounded-t-[36px] bg-[#e9e9e9] px-1">
              <div className="flex h-[508px] flex-col">
                <svg
                  viewBox="0 0 40 40"
                  className="ml-auto mr-[16px] mt-[18px] h-10 w-10"
                  fill="none"
                  stroke="#fff"
                  strokeWidth="1.800"
                >
                  <circle cx="20" cy="20" r="19.700" fill="#d2d2d2" stroke="none" />
                  <path d="m12.500 12.500 15 15M27.500 12.500l-15 15" />
                </svg>
                <svg
                  viewBox="0 0 102 79"
                  className="ml-[209px] mt-[150px] h-[79px] w-[102px]"
                  fill="none"
                  stroke="#d6d6d6"
                  strokeWidth="4"
                  strokeLinejoin="round"
                >
                  <rect x="2" y="2" width="98" height="75" rx="10" />
                  <circle cx="28" cy="29" r="5.500" />
                  <path d="M3 51.500c12-4.500 23-3 34 7.500 7-31 37-37 63-21" />
                </svg>
                <span className="ml-[22px] mt-[167px] flex h-[33px] w-[79px] items-center justify-center rounded-full bg-[#bbb] pt-px text-[17.500px] text-[#e3e8f4]">
                  图片
                </span>
              </div>
              <div className="h-[266px] pr-[7px] [background:linear-gradient(#e9e9e9_14px,#fff_14px)]">
                <div className="h-full rounded-t-[29px] bg-[#f7f8fa] px-[15px] pt-[16px]">
                  <div className="pl-[21px] text-[36px] leading-[50px] text-[#f05e59]">免费</div>
                  <div className="mt-[20px] h-[126px] rounded-[14px] bg-white pl-[21px] pt-[23px]">
                    <div className="text-[25.2px] leading-9 text-[#1e222b]">请输入商品名称</div>
                    <div className="mt-[13px] text-[21.6px] leading-8 text-[#999]">例如，专柜正品优惠折</div>
                  </div>
                  <div className="mt-[14px] h-[126px] rounded-[14px] bg-white pl-[21px] pt-4">
                    <div className="text-[25.2px] font-bold leading-9 text-[#333]">商品详情</div>
                  </div>
                </div>
              </div>
              <div className="absolute inset-y-0 right-1 w-[7px] bg-black/[0.06]">
                <div className="h-[539px] rounded-b-full bg-[#c0c0c0]" />
              </div>
            </div>
          </div>

          <div className="flex flex-1 flex-col items-center bg-white pt-5">
            <div className="mr-[3px] flex h-[79px] w-[464px] items-center justify-center rounded-full bg-[#ec5f59] pt-[2px] text-[25.2px] text-white">
              去购买
            </div>
            <div className="mt-[13px] h-[7px] w-[191px] rounded-full bg-[#333]" />
          </div>
        </div>
      </div>
      <div className="mt-[36px] text-[21.6px] text-[#9aa3b5]">图为移动端效果，最终效果在不同设备会有差异</div>
    </div>
  );
}

/* ---------- red guide marks drawn over the page ---------- */

function GuideMarks() {
  return (
    <svg
      viewBox="0 0 2724 1502"
      className="pointer-events-none absolute inset-0 z-20 h-full w-full drop-shadow-[3px_5px_4px_rgba(0,0,0,0.4)]"
      fill="none"
      stroke="#eb3323"
      strokeLinecap="round"
      strokeLinejoin="round"
    >
      <path d="M256 332.500 456 219" strokeWidth="6" />
      <path d="M436 218 457 219 446.500 237" strokeWidth="7" />
      <path d="M637 223 782.500 1022" strokeWidth="5.500" />
      <path d="M768.500 1008 783 1024.500 791.500 1004" strokeWidth="6" />
      <rect x="741" y="1056" width="826" height="212" rx="5" strokeWidth="6" />
    </svg>
  );
}

export default function App() {
  return (
    <div className="h-[1502px] w-[2724px] overflow-hidden bg-black font-['Liberation_Sans','Noto_Sans_CJK_SC',sans-serif]">
      <div className="relative flex h-full overflow-hidden rounded-b-[10px] bg-white">
        <Sidebar />
        <div className="flex min-w-0 flex-1 flex-col">
          <TopBar />
          <div className="flex min-h-0 flex-1">
            <SubMenu />
            <ProductForm />
            <PhonePreview />
          </div>
        </div>
        <GuideMarks />
      </div>
    </div>
  );
}
